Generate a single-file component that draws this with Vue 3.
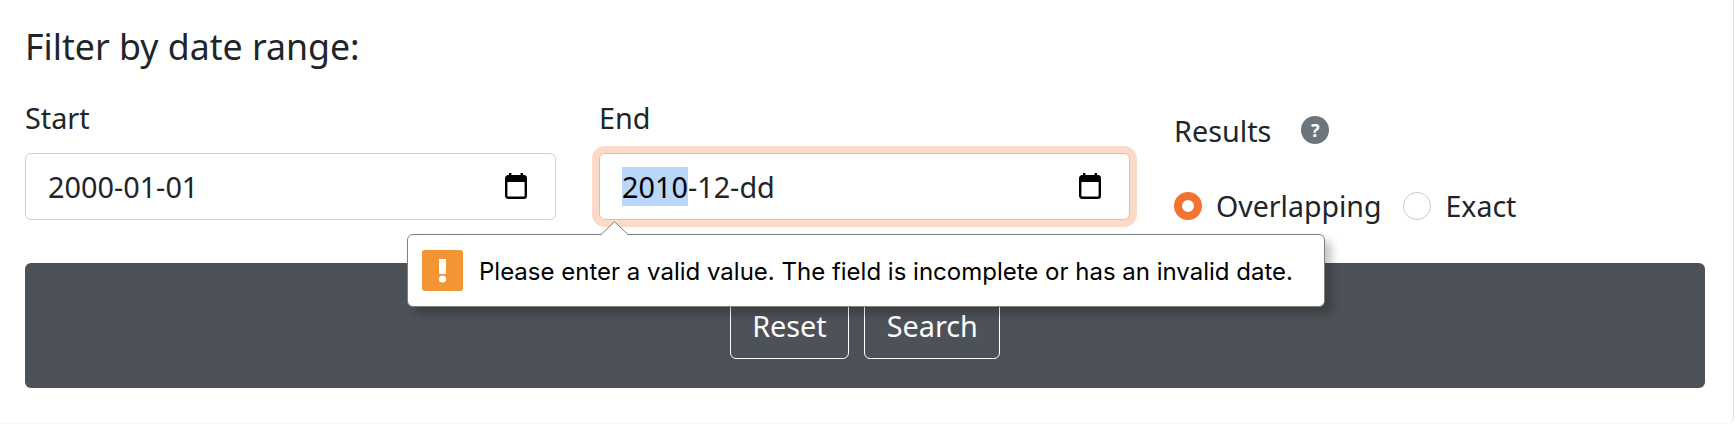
<script setup>
const fields = [
  { id: 'start', label: 'Start', focused: false, selected: '', rest: '2000-01-01' },
  { id: 'end', label: 'End', focused: true, selected: '2010', rest: '-12-dd' },
]
</script>

<template>
  <div class="card">
    <h2 class="title">Filter by date range:</h2>
    <div class="row">
      <div v-for="f in fields" :key="f.id" class="field">
        <div class="label">{{ f.label }}</div>
        <div class="input" :class="{ focused: f.focused }">
          <span class="value"><span v-if="f.selected" class="sel">{{ f.selected }}</span>{{ f.rest }}</span>
          <svg class="cal" width="22" height="26" viewBox="0 0 22 26">
            <rect x="1.2" y="3.2" width="19.6" height="21.6" rx="2" fill="#fff" stroke="#000" stroke-width="2.4" />
            <rect x="1" y="3" width="20" height="6" fill="#000" />
            <rect x="4" y="0" width="2.4" height="4" fill="#000" />
            <rect x="15.6" y="0" width="2.4" height="4" fill="#000" />
          </svg>
        </div>
      </div>
      <div class="results">
        <div class="results-head">
          <span>Results</span>
          <span class="help">?</span>
        </div>
        <div class="radios">
          <span class="radio on"></span><span class="opt first">Overlapping</span>
          <span class="radio"></span><span class="opt">Exact</span>
        </div>
      </div>
    </div>
    <div class="bar">
      <button class="btn reset">Reset</button>
      <button class="btn search">Search</button>
    </div>
    <div class="bubble">
      <svg class="tip" width="30" height="15" viewBox="0 0 30 15">
        <path d="M0.5 14 L14.5 0.7 L28.5 14" fill="#fff" stroke="#7f7f7f" stroke-width="1" />
      </svg>
      <svg class="warn" width="41" height="41" viewBox="0 0 41 41">
        <rect width="41" height="41" rx="3" fill="#f39435" />
        <rect x="17" y="9" width="7" height="15" fill="#fff" />
        <circle cx="20.5" cy="29" r="3.6" fill="#fff" />
      </svg>
      <span class="msg">Please enter a valid value. The field is incomplete or has an invalid date.</span>
    </div>
  </div>
</template>

<style scoped>
.card {
  position: relative;
  box-sizing: border-box;
  width: 1734px;
  height: 424px;
  padding: 22px 28px 0 25px;
  background: #fff;
  border-right: 1px solid #dde2e8;
  border-bottom: 1px solid #f7f8fa;
  border-bottom-right-radius: 7px;
  font-family: "Noto Sans", sans-serif;
  font-size: 28.8px;
  color: #212529;
}
.title {
  margin: 0;
  font-size: 35.7px;
  font-weight: 400;
  line-height: 48px;
}
.row {
  display: flex;
  gap: 43px;
  margin-top: 28px;
}
.field {
  width: 531px;
}
.label {
  line-height: 40px;
  margin-bottom: 15px;
}
.input {
  box-sizing: border-box;
  height: 67px;
  display: flex;
  align-items: center;
  justify-content: space-between;
  padding: 0 28px 0 22px;
  border: 1px solid #ced1d5;
  border-radius: 6px;
  background: #fff;
}
.input.focused {
  border-color: #f8b88f;
  box-shadow: 0 0 0 7px #fbdaca;
}
.value {
  line-height: 39px;
}
.sel {
  background: #b9d6fb;
  color: #000;
}
.cal {
  flex: none;
  margin-top: -2px;
}
.results {
  flex: 1;
  margin-left: 1px;
}
.results-head {
  display: flex;
  align-items: center;
  gap: 30px;
  height: 40px;
  margin-top: 12px;
}
.help {
  width: 28px;
  height: 28px;
  border-radius: 50%;
  background: #6c757d;
  color: #fff;
  font-size: 18px;
  font-weight: 700;
  line-height: 28px;
  text-align: center;
}
.radios {
  display: flex;
  align-items: center;
  margin-top: 36px;
  height: 40px;
}
.radio {
  box-sizing: border-box;
  flex: none;
  width: 28px;
  height: 28px;
  border-radius: 50%;
  border: 1px solid #c9ccd0;
  background: #fff;
  margin-right: 14px;
}
.radio.on {
  border: 8px solid #f37430;
}
.opt {
  font-size: 28.5px;
}
.opt.first {
  margin-right: 22px;
}
.bar {
  box-sizing: border-box;
  height: 125px;
  margin-top: 37px;
  display: flex;
  align-items: center;
  justify-content: center;
  gap: 15px;
  background: #4d5158;
  border-radius: 6px;
}
.btn {
  box-sizing: border-box;
  height: 66px;
  padding: 0 21.5px;
  border: 1px solid #fff;
  border-radius: 6px;
  background: transparent;
  color: #fff;
  font: inherit;
}
.bubble {
  position: absolute;
  left: 407px;
  top: 234px;
  box-sizing: border-box;
  width: 918px;
  height: 73px;
  display: flex;
  align-items: center;
  gap: 16px;
  padding-left: 14px;
  background: #fff;
  border: 1px solid #7f7f7f;
  border-radius: 6px;
  box-shadow: 7px 7px 8px rgba(0, 0, 0, 0.22);
}
.tip {
  position: absolute;
  left: 192px;
  top: -14px;
}
.warn {
  flex: none;
}
.msg {
  margin-top: 2px;
  font-family: Inter, sans-serif;
  font-size: 24px;
  color: #000;
  white-space: nowrap;
}
</style>
